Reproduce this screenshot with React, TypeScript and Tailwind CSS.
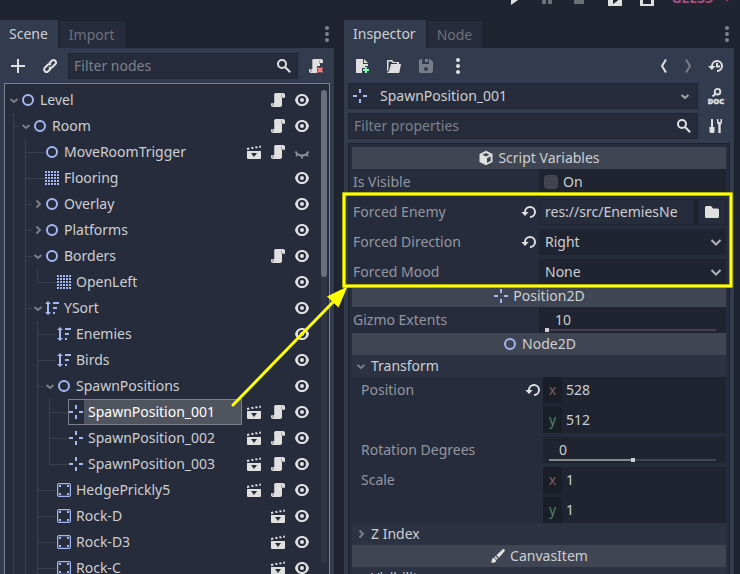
import React from "react";

type P = { className?: string };

function Ico({ children, className = "" }: { children: React.ReactNode; className?: string }) {
  return (
    <svg viewBox="0 0 16 16" aria-hidden="true" className={"size-4 shrink-0 " + className} fill="#e0e0e0">
      {children}
    </svg>
  );
}

const Node2DIcon = ({ className }: P) => (
  <Ico className={className}>
    <circle cx="8" cy="8" r="5" fill="none" stroke="#a5b7f3" strokeWidth="2" />
  </Ico>
);
const TileIcon = () => (
  <Ico>
    <g fill="#a5b7f3">
      {[1, 4, 7, 10, 13].map((y) => [1, 4, 7, 10, 13].map((x) => <rect key={x + "-" + y} x={x} y={y} width="2" height="2" />))}
    </g>
  </Ico>
);
const SortIcon = () => (
  <Ico>
    <path fill="#a5b7f3" d="M4 1 1 4h2v8H1l3 3 3-3H5V4h2zM9 2h6v2H9zM9 7h4v2H9zM9 12h2v2H9z" />
  </Ico>
);
const PositionIcon = ({ className }: P) => (
  <Ico className={className}>
    <path fill="#a5b7f3" d="M7 1h2v4H7zM7 11h2v4H7zM1 7h4v2H1zM11 7h4v2h-4z" />
  </Ico>
);
const BodyIcon = () => (
  <Ico>
    <rect x="1.6" y="1.6" width="12.8" height="12.8" rx="1.4" fill="none" stroke="#a5b7f3" strokeWidth="1.2" />
    <path fill="#a5b7f3" d="M3 3h2v2H3zM11 3h2v2h-2zM3 11h2v2H3zM11 11h2v2h-2z" />
  </Ico>
);
const ScriptIcon = () => (
  <Ico>
    <path d="M6 1h7c1.100 0 2 .9 2 2v2h-3v8c0 1.100-.9 2-2 2H3c-1.100 0-2-.9-2-2v-2h3V3c0-1.100.9-2 2-2z" />
    <path fill="#a9abaf" d="M1 11h3v2c0 .6-.4 1-1 1s-1-.4-1-1v-1H1zM11 2.500c0-.8.400-1.500 1-1.500-.3.400 0 1 0 2v3h-1z" />
    <path fill="#a9abaf" d="M11 5h4v1h-4z" />
    <path fill="#b4b6ba" d="M4 3h1v8H4z" />
  </Ico>
);
const ScriptRemoveIcon = () => (
  <Ico>
    <path d="M6 1h7c1.100 0 2 .9 2 2v2h-3v3H9v7H3c-1.100 0-2-.9-2-2v-2h3V3c0-1.100.9-2 2-2z" />
    <path fill="#a9abaf" d="M1 11h3v2c0 .6-.4 1-1 1s-1-.4-1-1v-1H1zM11 2h1v4h-1zM4 3h1v8H4z" />
    <path d="M9.700 9.700l4.600 4.600M14.300 9.700L9.700 14.300" stroke="#ff7f7f" strokeWidth="2.200" />
  </Ico>
);
const EyeIcon = () => (
  <Ico>
    <path fillRule="evenodd" d="M8 2C4.800 2 2 4 1 8c1 4 3.800 6 7 6s6-2 7-6c-1-4-3.800-6-7-6zm0 2a4 4 0 0 1 0 8 4 4 0 0 1 0-8z" />
    <circle cx="8" cy="8" r="2" />
  </Ico>
);
const ClosedEyeIcon = () => (
  <Ico>
    <path d="M1.500 7.500c1.300 2.500 3.600 4 6.500 4s5.200-1.500 6.500-4M8 11.500v3M3.700 10.200l-1.500 2M12.300 10.200l1.500 2" fill="none" stroke="#8f929b" strokeWidth="1.800" />
  </Ico>
);
const ClapIcon = () => (
  <Ico>
    <path fillRule="evenodd" d="M1 7h14v7a1 1 0 0 1-1 1H2a1 1 0 0 1-1-1zM5 9l3 4 3-4zM1 4l2-.4.6 2-2.6.4zM5 3.200l2-.4.8 1.900-2 .4zM9 2.600l2-.4.8 1.900-2 .4zM13 1.900l1.800-.3.2 2-1.300.3z" />
  </Ico>
);
const SearchIcon = () => (
  <Ico>
    <circle cx="6" cy="6" r="4" fill="none" stroke="#e0e0e0" strokeWidth="2" />
    <path d="m9 9 5.200 5.200" stroke="#e0e0e0" strokeWidth="2" />
  </Ico>
);
const PlusIcon = () => (
  <Ico>
    <path d="M7 1h2v6h6v2H9v6H7V9H1V7h6z" />
  </Ico>
);
const LinkIcon = () => (
  <Ico>
    <g fill="none" stroke="#e0e0e0" strokeWidth="2">
      <path d="M7.300 5.300 9.800 2.800a2.400 2.400 0 0 1 3.400 3.400l-3 3a2.400 2.400 0 0 1-3.200 0" />
      <path d="M8.700 10.700l-2.500 2.500a2.400 2.400 0 0 1-3.400-3.400l3-3a2.400 2.400 0 0 1 3.200 0" />
    </g>
  </Ico>
);
const DotsIcon = ({ className = "" }: P) => (
  <Ico className={className}>
    <circle cx="8" cy="2" r="2" />
    <circle cx="8" cy="8" r="2" />
    <circle cx="8" cy="14" r="2" />
  </Ico>
);
const NewIcon = () => (
  <Ico>
    <path d="M2 1h7v5h5v2h-3v2H8v5H2zM10 1l4 4h-4z" />
    <path fill="#84ffb1" d="M11 9h2v2h2v2h-2v2h-2v-2H9v-2h2z" />
  </Ico>
);
const FolderOpenIcon = () => (
  <Ico>
    <path d="M2 2h4l2 2h5v2h-2V5H7L5 3.500H2.500V11L1 14V3a1 1 0 0 1 1-1z" />
    <path d="M5 6h10l-1.500 8a1 1 0 0 1-1 1H2a1 1 0 0 1-1-1c1.500 0 2-.6 2.300-2z" />
  </Ico>
);
const SaveIcon = () => (
  <Ico className="opacity-40">
    <path fillRule="evenodd" d="M1 3a2 2 0 0 1 2-2h1v5h7V1h1l3 3v9a2 2 0 0 1-2 2H3a2 2 0 0 1-2-2zM8 9a2 2 0 0 0 0 4 2 2 0 0 0 0-4zM7 1h3v3H7z" />
  </Ico>
);
const HistoryIcon = () => (
  <Ico>
    <path d="M4 9V8a5 5 0 1 1 5 5M9 5v3.500h3" fill="none" stroke="#e0e0e0" strokeWidth="2" />
    <path d="M0 8h7.500L3.800 12z" />
  </Ico>
);
const DocIcon = () => (
  <svg viewBox="0 0 16 16" aria-hidden="true" className="size-4 shrink-0 overflow-visible">
    <circle cx="9.500" cy="3.700" r="2.800" fill="none" stroke="#e0e0e0" strokeWidth="1.900" />
    <path d="M7.500 5.700 4.500 8.500" stroke="#e0e0e0" strokeWidth="2" />
    <text x="8" y="15.500" textAnchor="middle" fontSize="7.500" fontWeight="900" fill="#e0e0e0" stroke="#e0e0e0" strokeWidth=".4">
      DOC
    </text>
  </svg>
);
const ToolsIcon = () => (
  <Ico>
    <path d="M3 1h2v5H5v3h1.500v4.500a1.500 1.500 0 0 1-1.500 1.500H3a1.500 1.500 0 0 1-1.500-1.500V9H3V6zM9 1h1.500v3h2V1H14v3.500L12.700 7v8h-2.400V7L9 4.500z" />
  </Ico>
);
const ReloadIcon = () => (
  <Ico>
    <path d="M4 9V8a5 5 0 1 1 5 5" fill="none" stroke="#e0e0e0" strokeWidth="2" />
    <path d="M.3 8h7.400L4 12z" />
  </Ico>
);
const FolderIcon = () => (
  <Ico>
    <path d="M1 3.500A1.500 1.500 0 0 1 2.500 2H7l2 2.500h4.500A1.500 1.500 0 0 1 15 6v6.500a1.500 1.500 0 0 1-1.500 1.500h-11A1.500 1.500 0 0 1 1 12.500z" />
  </Ico>
);
const CubeIcon = () => (
  <Ico>
    <path fillRule="evenodd" d="M8 .8 14.500 4v8L8 15.200 1.500 12V4zM8 3 4.500 4.700 8 6.500l3.500-1.800zM9 8.200v4.600l3.700-1.900V6.300z" />
  </Ico>
);
const BrushIcon = () => (
  <Ico>
    <path d="M12.800 1.300c1-.9 2.800.6 1.900 1.800L9 9.800 6.300 7.200zM5.500 8l2.400 2.500-1.300 1.200L4.300 9.300zM3.800 9.700l2.400 2.500C6 14.500 3.500 15.200 1 14.600c1-1 .5-2 1-3.400.3-.8 1-1.300 1.800-1.500z" />
  </Ico>
);
function Chevron({ className = "", dir = "down" }: P & { dir?: "down" | "right" }) {
  return (
    <svg viewBox="0 0 12 12" aria-hidden="true" className={"size-3 shrink-0 " + className} fill="none" stroke="currentColor" strokeWidth="2">
      <path d={dir === "down" ? "M2.500 5 6 8l3.500-3" : "M4.500 2.500 8 6l-3.500 3.500"} />
    </svg>
  );
}

type Kind = "node" | "tile" | "sort" | "pos" | "body";
type Row = {
  name: string;
  depth: number;
  kind: Kind;
  open?: boolean;
  closed?: boolean;
  last?: boolean;
  clap?: boolean;
  script?: boolean;
  hidden?: boolean;
  selected?: boolean;
};

const rows: Row[] = [
  { name: "Level", depth: 0, kind: "node", open: true, script: true },
  { name: "Room", depth: 1, kind: "node", open: true, script: true },
  { name: "MoveRoomTrigger", depth: 2, kind: "node", clap: true, script: true, hidden: true },
  { name: "Flooring", depth: 2, kind: "tile" },
  { name: "Overlay", depth: 2, kind: "node", closed: true },
  { name: "Platforms", depth: 2, kind: "node", closed: true },
  { name: "Borders", depth: 2, kind: "node", open: true, script: true },
  { name: "OpenLeft", depth: 3, kind: "tile", last: true },
  { name: "YSort", depth: 2, kind: "sort", open: true },
  { name: "Enemies", depth: 3, kind: "sort" },
  { name: "Birds", depth: 3, kind: "sort" },
  { name: "SpawnPositions", depth: 3, kind: "node", open: true },
  { name: "SpawnPosition_001", depth: 4, kind: "pos", clap: true, script: true, selected: true },
  { name: "SpawnPosition_002", depth: 4, kind: "pos", clap: true, script: true },
  { name: "SpawnPosition_003", depth: 4, kind: "pos", clap: true, script: true, last: true },
  { name: "HedgePrickly5", depth: 3, kind: "body", clap: true, script: true },
  { name: "Rock-D", depth: 3, kind: "body", clap: true },
  { name: "Rock-D3", depth: 3, kind: "body", clap: true },
  { name: "Rock-C", depth: 3, kind: "body", clap: true },
];

const kindIcon: Record<Kind, React.ReactNode> = {
  node: <Node2DIcon />,
  tile: <TileIcon />,
  sort: <SortIcon />,
  pos: <PositionIcon />,
  body: <BodyIcon />,
};

function TreeRow({ row }: { row: Row }) {
  const folder = row.open || row.closed;
  return (
    <li className={"flex h-[26px] items-center pr-[11px] " + (row.depth === 0 ? "pl-[3px]" : "pl-2")}>
      {Array.from({ length: Math.max(0, row.depth - 1) }, (_, i) => (
        <span key={i} className="h-full w-3 shrink-0 border-l border-[#3b404e]" />
      ))}
      {row.depth > 0 && (
        <span className={"flex h-full shrink-0 flex-col " + (folder ? "w-[7px]" : "w-[19px]")}>
          <span className="h-3.5 border-b border-l border-[#3b404e]" />
          {!row.last && <span className="flex-1 border-l border-[#3b404e]" />}
        </span>
      )}
      {folder && (
        <button aria-label={"Toggle " + row.name} className="text-[#7b7f88]">
          <Chevron dir={row.open ? "down" : "right"} />
        </button>
      )}
      {row.selected ? (
        <span className="flex h-[26px] flex-1 border border-[#7b7f8a]">
          <span className="-ml-px flex items-center">{kindIcon[row.kind]}</span>
          <span className="flex flex-1 items-center bg-[#50545f] pl-1 text-white">{row.name}</span>
        </span>
      ) : (
        <span className="flex flex-1 items-center gap-1">
          {kindIcon[row.kind]}
          {row.name}
        </span>
      )}
      <span className={"flex gap-2 " + (row.selected ? "pl-1" : "")}>
        {row.clap && <button aria-label="Open scene"><ClapIcon /></button>}
        {row.script && <button aria-label="Open script"><ScriptIcon /></button>}
        <button aria-label="Toggle visibility">{row.hidden ? <ClosedEyeIcon /> : <EyeIcon />}</button>
      </span>
    </li>
  );
}

function Tabs({ names }: { names: [string, string] }) {
  return (
    <div className="flex h-7 items-stretch gap-0.5">
      <button className="bg-[#333b4f] pr-2.5 pl-[9px] text-[#cdcfd2]">{names[0]}</button>
      <button className="border-t border-[#1d212b] bg-[#262c3b] pr-2.5 pl-[9px] text-[#6c717c]">{names[1]}</button>
      <button aria-label="Dock menu" className="ml-auto opacity-50">
        <DotsIcon />
      </button>
    </div>
  );
}

function SearchBox({ label }: { label: string }) {
  return (
    <label className="flex h-[26px] min-w-0 flex-1 items-center border border-[#202531] bg-[#262c3b] px-[5px]">
      <input aria-label={label} placeholder={label} className="min-w-0 flex-1 bg-transparent outline-none placeholder:text-[#7d818a]" />
      <SearchIcon />
    </label>
  );
}

function Category({ icon, children }: { icon: React.ReactNode; children: React.ReactNode }) {
  return (
    <h2 className="flex h-[22px] items-center justify-center gap-1 bg-[#404553] text-[#cdcfd2]">
      {icon}
      {children}
    </h2>
  );
}

function Section({ open, children }: { open?: boolean; children: React.ReactNode }) {
  return (
    <button className="flex h-[22px] items-center gap-1 bg-[#2c3241] pl-[3px] text-[#cdcfd2]">
      <Chevron dir={open ? "down" : "right"} className="text-[#7b7f88]" />
      {children}
    </button>
  );
}

function Prop({ label, id, indent, reset, children }: { label: string; id: string; indent?: boolean; reset?: boolean; children: React.ReactNode }) {
  return (
    <div className={"flex items-start " + (indent ? "pl-[9px]" : "pl-px")}>
      <div className="flex h-[26px] flex-1 items-center justify-between pr-0.5 text-[#9496a0]">
        <label htmlFor={id}>{label}</label>
        {reset && (
          <button aria-label={"Reset " + label}>
            <ReloadIcon />
          </button>
        )}
      </div>
      <div className={indent ? "w-[183px]" : "w-[187px]"}>{children}</div>
    </div>
  );
}

function Choice({ id, value }: { id: string; value: string }) {
  return (
    <div className="flex items-center bg-[#202430]">
      <select id={id} defaultValue={value} className="h-[26px] w-0 flex-1 appearance-none bg-transparent pl-1.5 outline-none">
        <option>{value}</option>
      </select>
      <svg viewBox="0 0 16 16" className="mr-0.5 size-4" fill="none" stroke="#b1b3b8" strokeWidth="2" aria-hidden="true">
        <path d="m3.500 6 4.500 4.500L12.500 6" />
      </svg>
    </div>
  );
}

function Slide({ id, value, pos, filled }: { id: string; value: string; pos: number; filled?: boolean }) {
  return (
    <div className="flex h-[26px] flex-col bg-[#202430] pr-2.5 pl-1.5">
      <input id={id} defaultValue={value} className="h-[21px] w-full bg-transparent pt-1 pl-2.5 outline-none" />
      <input
        type="range"
        aria-label={id}
        defaultValue={pos}
        className={
          "h-1 w-full appearance-none bg-[linear-gradient(var(--c),var(--c)),linear-gradient(#42454f,#42454f)] bg-[length:50%_2px,100%_2px] bg-left bg-no-repeat [&::-webkit-slider-thumb]:size-1 [&::-webkit-slider-thumb]:appearance-none [&::-webkit-slider-thumb]:bg-[#cdcfd2] " +
          (filled ? "[--c:#87898f]" : "[--c:transparent]")
        }
      />
    </div>
  );
}

function Vector({ id, x, y }: { id: string; x: string; y: string }) {
  return (
    <div className="flex flex-col gap-1 bg-[#202430]">
      <div className="flex h-[26px]">
        <span className="flex w-[19px] items-center justify-center bg-[#1a1e29] text-[#80605c]">x</span>
        <input id={id} defaultValue={x} className="min-w-0 flex-1 bg-transparent pl-1 outline-none" />
      </div>
      <div className="flex h-[26px]">
        <span className="flex w-[19px] items-center justify-center bg-[#1a1e29] text-[#4c8563]">y</span>
        <input aria-label={id + " y"} defaultValue={y} className="min-w-0 flex-1 bg-transparent pl-1 outline-none" />
      </div>
    </div>
  );
}

function SceneDock() {
  return (
    <section className="flex w-[335px] shrink-0 flex-col">
      <Tabs names={["Scene", "Import"]} />
      <div className="flex min-h-0 flex-1 flex-col border-r border-[#1b1f29] bg-[#333b4f]">
        <div className="flex items-center px-2.5 pt-[5px] pb-1">
          <button aria-label="Add node"><PlusIcon /></button>
          <button aria-label="Instance scene" className="mr-2.5 ml-4"><LinkIcon /></button>
          <SearchBox label="Filter nodes" />
          <button aria-label="Detach script" className="ml-2.5"><ScriptRemoveIcon /></button>
        </div>
        <div className="mx-1 flex min-h-0 flex-1 border border-b-0 border-[#7c818d] bg-[#262c3b]">
          <ul className="min-w-0 flex-1 pt-[3px]">
            {rows.map((r) => (
              <TreeRow key={r.name} row={r} />
            ))}
          </ul>
          <div className="mt-1.5 mr-0.5 mb-2.5 w-1.5 rounded bg-[#303544]">
            <div className="h-[187px] rounded bg-[#6b6f7b]" />
          </div>
        </div>
      </div>
    </section>
  );
}

function InspectorDock() {
  return (
    <section className="flex min-w-0 flex-1 flex-col">
      <Tabs names={["Inspector", "Node"]} />
      <div className="flex min-h-0 flex-1 flex-col border-r border-[#1b1f29] bg-[#333b4f] px-1">
        <div className="flex h-[35px] items-center gap-4 px-1.5">
          <button aria-label="New resource"><NewIcon /></button>
          <button aria-label="Open resource"><FolderOpenIcon /></button>
          <button aria-label="Save resource"><SaveIcon /></button>
          <button aria-label="More"><DotsIcon /></button>
          <button aria-label="Back" className="ml-auto -mr-2">
            <Ico><path d="m10 1.500-4 6.500 4 6.500" fill="none" stroke="#e0e0e0" strokeWidth="2" /></Ico>
          </button>
          <button aria-label="Forward" className="opacity-40">
            <Ico><path d="m6 1.500 4 6.500-4 6.500" fill="none" stroke="#e0e0e0" strokeWidth="2" /></Ico>
          </button>
          <button aria-label="History" className="-ml-1"><HistoryIcon /></button>
        </div>
        <div className="flex items-center">
          <div className="flex h-[26px] flex-1 items-center border border-[#202531] bg-[#262c3b] pr-1.5 pl-[3px]">
            <PositionIcon />
            <select aria-label="Edited object" defaultValue="SpawnPosition_001" className="min-w-0 flex-1 appearance-none bg-transparent pl-3 outline-none">
              <option>SpawnPosition_001</option>
            </select>
            <Chevron className="text-[#a4a6ac]" />
          </div>
          <button aria-label="Documentation" className="mr-1.5 ml-2.5"><DocIcon /></button>
        </div>
        <div className="flex items-center pt-1">
          <SearchBox label="Filter properties" />
          <button aria-label="Property tools" className="mr-1.5 ml-2.5"><ToolsIcon /></button>
        </div>
        <div className="mt-1 flex min-h-0 flex-1 flex-col overflow-hidden border border-b-0 border-[#1d212c] bg-[#262c3b] px-[3px] pt-[3px] *:shrink-0">
          <Category icon={<CubeIcon />}>Script Variables</Category>
          <Prop label="Is Visible" id="visible">
            <div className="flex h-[26px] items-center gap-[5px] bg-[#202430] pl-[5px]">
              <input id="visible" type="checkbox" className="size-3.5 appearance-none rounded-sm bg-[#42454f]" />
              <label htmlFor="visible">On</label>
            </div>
          </Prop>
          <div className="flex flex-col gap-1 pt-1">
            <Prop label="Forced Enemy" id="enemy" reset>
              <div className="flex h-[26px] items-stretch bg-[#202430]">
                <input id="enemy" defaultValue="res://src/EnemiesNe" className="my-px ml-px min-w-0 flex-1 bg-[#262c3b] pl-[5px] outline-none" />
                <button aria-label="Browse" className="my-px mr-px ml-1.5 bg-[#262c3b] px-[5px]"><FolderIcon /></button>
              </div>
            </Prop>
            <Prop label="Forced Direction" id="direction" reset>
              <Choice id="direction" value="Right" />
            </Prop>
            <Prop label="Forced Mood" id="mood">
              <Choice id="mood" value="None" />
            </Prop>
          </div>
          <Category icon={<PositionIcon />}>Position2D</Category>
          <Prop label="Gizmo Extents" id="gizmo">
            <Slide id="gizmo" value="10" pos={0} />
          </Prop>
          <Category icon={<Node2DIcon />}>Node2D</Category>
          <Section open>Transform</Section>
          <div className="flex flex-col gap-1">
            <Prop label="Position" id="position" indent reset>
              <Vector id="position" x="528" y="512" />
            </Prop>
            <Prop label="Rotation Degrees" id="rotation" indent>
              <Slide id="rotation" value="0" pos={50} filled />
            </Prop>
            <Prop label="Scale" id="scale" indent>
              <Vector id="scale" x="1" y="1" />
            </Prop>
          </div>
          <Section>Z Index</Section>
          <Category icon={<BrushIcon />}>CanvasItem</Category>
          <Section open>Visibility</Section>
        </div>
      </div>
    </section>
  );
}

export default function App() {
  return (
    <div className="relative flex h-screen flex-col overflow-hidden bg-[#202430] font-['Noto_Sans',sans-serif] text-sm leading-5 text-[#cdcfd2]">
      <header className="h-5 shrink-0 overflow-hidden">
        <div className="-mt-[15px] flex h-[26px] items-center justify-end gap-4 pr-[7px]">
          <button aria-label="Play"><Ico><path d="M4 1v14l10-7z" /></Ico></button>
          <button aria-label="Pause" className="opacity-40"><Ico><path d="M3 2h4v12H3zM9 2h4v12H9z" /></Ico></button>
          <button aria-label="Stop" className="mr-1 opacity-40"><Ico><path d="M3 2h10v12H3z" /></Ico></button>
          <button aria-label="Play scene"><Ico><path fillRule="evenodd" d="M1 2h14v14H1zM6 7v7l5-3.500z" /></Ico></button>
          <button aria-label="Play custom scene"><Ico><path fillRule="evenodd" d="M1 2h14v14H1zM4 6v8h8V6z" /></Ico></button>
          <button className="flex items-center gap-2 font-bold text-[#a54f7c]">
            GLES3
            <Chevron />
          </button>
        </div>
      </header>
      <main className="flex min-h-0 flex-1 gap-[9px] pr-[5px]">
        <SceneDock />
        <InspectorDock />
      </main>
      <svg className="pointer-events-none absolute top-0 left-0 h-[574px] w-[740px]" viewBox="0 0 740 574" aria-hidden="true">
        <rect x="344" y="194" width="387" height="92" fill="none" stroke="#8c8c14" strokeWidth="4" />
        <rect x="344" y="194" width="387" height="92" fill="none" stroke="#ffff00" strokeWidth="2.600" />
        <path d="M233 405 336 299" stroke="#ffff00" strokeWidth="3" strokeLinecap="round" />
        <path d="M347.500 286.500 327 296.500 338.500 307.500z" fill="#ffff00" />
      </svg>
    </div>
  );
}
